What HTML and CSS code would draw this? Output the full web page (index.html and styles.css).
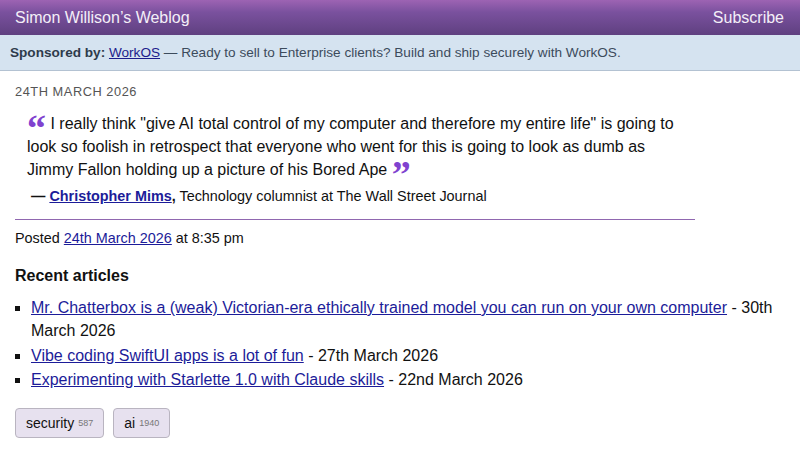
FILE: index.html
```html
<!DOCTYPE html>
<html lang="en">
<head>
<meta charset="utf-8">
<title>Simon Willison’s Weblog</title>
<link rel="stylesheet" href="styles.css">
</head>
<body>
<header class="site-header">
  <a class="site-title" href="#">Simon Willison’s Weblog</a>
  <a class="subscribe" href="#">Subscribe</a>
</header>
<div class="sponsor">
  <strong>Sponsored by:</strong> <a href="#">WorkOS</a> — Ready to sell to Enterprise clients? Build and ship securely with WorkOS.
</div>
<main class="content">
  <section class="entry">
    <div class="date">24th March 2026</div>
    <blockquote class="quote">
      <p><span class="qmark">“</span> I really think "give AI total control of my computer and therefore my entire life" is going to look so foolish in retrospect that everyone who went for this is going to look as dumb as Jimmy Fallon holding up a picture of his Bored Ape <span class="qmark">”</span></p>
      <p class="cite"><strong>— <a href="#">Christopher Mims</a>,</strong> Technology columnist at The Wall Street Journal</p>
    </blockquote>
    <hr class="rule">
    <p class="posted">Posted <a href="#">24th March 2026</a> at 8:35 pm</p>
  </section>
  <h3 class="recent-title">Recent articles</h3>
  <ul class="recent">
    <li><a href="#">Mr. Chatterbox is a (weak) Victorian-era ethically trained model you can run on your own computer</a> - 30th March 2026</li>
    <li><a href="#">Vibe coding SwiftUI apps is a lot of fun</a> - 27th March 2026</li>
    <li><a href="#">Experimenting with Starlette 1.0 with Claude skills</a> - 22nd March 2026</li>
  </ul>
  <div class="tags">
    <a class="tag" href="#">security <span class="count">587</span></a>
    <a class="tag" href="#">ai <span class="count">1940</span></a>
  </div>
</main>
</body>
</html>
```
FILE: styles.css
```css
html, body {
  margin: 0;
  padding: 0;
  background: #ffffff;
}
body {
  font-family: "Liberation Sans", Arial, sans-serif;
  color: #111;
}
a {
  color: #1c1c99;
}
.site-header {
  height: 35px;
  display: flex;
  align-items: center;
  justify-content: space-between;
  padding: 0 16px 0 15px;
  background: linear-gradient(to bottom, #9d63b3 0%, #7a519e 35%, #5f4080 100%);
}
.site-header a {
  color: #f4eff8;
  text-decoration: none;
  font-size: 16px;
}
.sponsor {
  height: 35px;
  line-height: 35px;
  padding: 0 10px;
  background: #d5e3f0;
  border-bottom: 1px solid #b3c2d2;
  font-size: 13.6px;
  color: #3c4b5c;
  white-space: nowrap;
}
.sponsor strong {
  color: #2e3b4b;
}
.sponsor a {
  color: #1c1c8c;
}
.content {
  padding: 0 15px;
}
.entry {
  width: 680px;
}
.date {
  margin-top: 13px;
  font-size: 12.8px;
  line-height: 16px;
  text-transform: uppercase;
  letter-spacing: 0.55px;
  color: #555;
}
.quote {
  margin: 12px 0 0 12px;
  padding: 0;
}
.quote p {
  margin: 0;
  font-size: 16px;
  line-height: 23px;
}
.qmark {
  font-family: "Liberation Serif", "Times New Roman", serif;
  font-weight: bold;
  font-size: 38px;
  line-height: 0;
  vertical-align: -12px;
  color: #8042cf;
}
.quote .cite {
  margin-top: 6px;
  margin-left: 4px;
  font-size: 14.4px;
  line-height: 18px;
}
.cite a {
  color: #1c1c99;
}
.rule {
  margin: 14px 0 0 0;
  border: 0;
  border-top: 1px solid #9067b0;
  height: 0;
}
.posted {
  margin: 9px 0 0 0;
  font-size: 14.4px;
  line-height: 18px;
}
.recent-title {
  margin: 19px 0 0 0;
  font-size: 16px;
  line-height: 20px;
}
.recent {
  margin: 10px 0 0 0;
  padding-left: 16px;
  list-style: square;
}
.recent li {
  font-size: 16px;
  line-height: 23px;
  margin-bottom: 1.5px;
}
.tags {
  display: flex;
  gap: 9px;
  margin-top: 17px;
}
.tag {
  display: flex;
  align-items: center;
  gap: 4px;
  height: 28px;
  padding: 0 10px;
  background: #e7e1ef;
  border: 1px solid #b9b4c0;
  border-radius: 4px;
  color: #111;
  text-decoration: none;
  font-size: 14px;
}
.count {
  font-size: 9px;
  color: #777;
}
```
